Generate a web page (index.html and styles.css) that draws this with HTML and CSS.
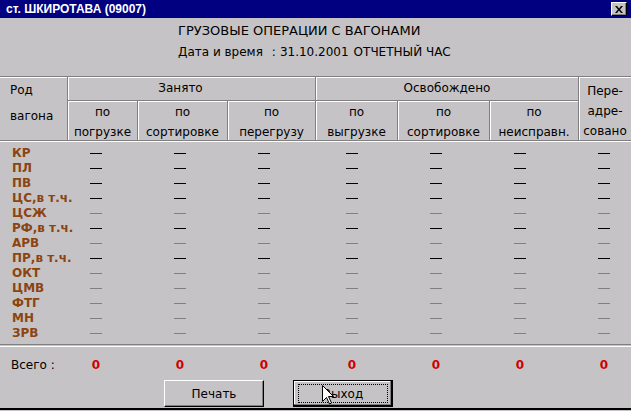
FILE: index.html
```html
<!DOCTYPE html>
<html>
	<head>
		<meta charset="utf-8">
		<title>Грузовые операции с вагонами</title>
		<link rel="stylesheet" href="styles.css">
	</head>
	<body>
		<div class="window">
			<div class="titlebar">
				<span class="titlebar__text">ст. ШКИРОТАВА (09007)</span>
				<button class="titlebar__close" type="button">
					<svg width="8" height="7" viewBox="0 0 8 7"><path d="M0 0h2l2 2.5L6 0h2L5 3.5 8 7H6L4 4.5 2 7H0l3-3.5z" fill="#000"/></svg>
				</button>
			</div>

			<div class="caption">
				<div class="caption__title">ГРУЗОВЫЕ ОПЕРАЦИИ С ВАГОНАМИ</div>
				<div class="caption__date"><span>Дата и время</span><span class="caption__colon">:</span><span>31.10.2001</span><span class="caption__hour">ОТЧЕТНЫЙ ЧАС</span></div>
			</div>

			<div class="head">
				<div class="head__cell head__rod"><span>Род</span><span>вагона</span></div>
				<div class="head__cell head__group head__busy">Занято</div>
				<div class="head__cell head__group head__free">Освобождено</div>
				<div class="head__cell head__re">Пере-<br>адре-<br>совано</div>
				<div class="head__cell head__sub">по<br>погрузке</div>
				<div class="head__cell head__sub">по<br>сортировке</div>
				<div class="head__cell head__sub">по<br>перегрузу</div>
				<div class="head__cell head__sub">по<br>выгрузке</div>
				<div class="head__cell head__sub">по<br>сортировке</div>
				<div class="head__cell head__sub">по<br>неисправн.</div>
			</div>

			<div class="data">
				<div class="data__row"><span class="data__label">КР</span><i class="dash"></i><i class="dash"></i><i class="dash"></i><i class="dash"></i><i class="dash"></i><i class="dash"></i><i class="dash"></i></div>
				<div class="data__row"><span class="data__label">ПЛ</span><i class="dash"></i><i class="dash"></i><i class="dash"></i><i class="dash"></i><i class="dash"></i><i class="dash"></i><i class="dash"></i></div>
				<div class="data__row"><span class="data__label">ПВ</span><i class="dash"></i><i class="dash"></i><i class="dash"></i><i class="dash"></i><i class="dash"></i><i class="dash"></i><i class="dash"></i></div>
				<div class="data__row"><span class="data__label">ЦС,в т.ч.</span><i class="dash"></i><i class="dash"></i><i class="dash"></i><i class="dash"></i><i class="dash"></i><i class="dash"></i><i class="dash"></i></div>
				<div class="data__row off"><span class="data__label">ЦСЖ</span><i class="dash"></i><i class="dash"></i><i class="dash"></i><i class="dash"></i><i class="dash"></i><i class="dash"></i><i class="dash"></i></div>
				<div class="data__row"><span class="data__label">РФ,в т.ч.</span><i class="dash"></i><i class="dash"></i><i class="dash"></i><i class="dash"></i><i class="dash"></i><i class="dash"></i><i class="dash"></i></div>
				<div class="data__row off"><span class="data__label">АРВ</span><i class="dash"></i><i class="dash"></i><i class="dash"></i><i class="dash"></i><i class="dash"></i><i class="dash"></i><i class="dash"></i></div>
				<div class="data__row"><span class="data__label">ПР,в т.ч.</span><i class="dash"></i><i class="dash"></i><i class="dash"></i><i class="dash"></i><i class="dash"></i><i class="dash"></i><i class="dash"></i></div>
				<div class="data__row off"><span class="data__label">ОКТ</span><i class="dash"></i><i class="dash"></i><i class="dash"></i><i class="dash"></i><i class="dash"></i><i class="dash"></i><i class="dash"></i></div>
				<div class="data__row off"><span class="data__label">ЦМВ</span><i class="dash"></i><i class="dash"></i><i class="dash"></i><i class="dash"></i><i class="dash"></i><i class="dash"></i><i class="dash"></i></div>
				<div class="data__row off"><span class="data__label">ФТГ</span><i class="dash"></i><i class="dash"></i><i class="dash"></i><i class="dash"></i><i class="dash"></i><i class="dash"></i><i class="dash"></i></div>
				<div class="data__row off"><span class="data__label">МН</span><i class="dash"></i><i class="dash"></i><i class="dash"></i><i class="dash"></i><i class="dash"></i><i class="dash"></i><i class="dash"></i></div>
				<div class="data__row off"><span class="data__label">ЗРВ</span><i class="dash"></i><i class="dash"></i><i class="dash"></i><i class="dash"></i><i class="dash"></i><i class="dash"></i><i class="dash"></i></div>
			</div>

			<div class="total">
				<span class="total__label">Всего :</span>
				<span class="total__value">0</span>
				<span class="total__value">0</span>
				<span class="total__value">0</span>
				<span class="total__value">0</span>
				<span class="total__value">0</span>
				<span class="total__value">0</span>
				<span class="total__value">0</span>
			</div>

			<div class="buttons">
				<button class="btn" type="button">Печать</button>
				<button class="btn btn--default" type="button">Выход</button>
			</div>

			<svg class="cursor" width="13" height="20" viewBox="0 0 13 20"><path d="M0.5 0.5V16.5L4.5 12.5L7.5 19L9.5 18L6.5 11.5H11.5Z" fill="#fff" stroke="#000" stroke-width="1"/></svg>
		</div>
	</body>
</html>
```

FILE: styles.css
```css
*{ box-sizing:border-box; }
html,body{ margin:0; padding:0; }
body{ background:#c6c3c6; font-family:"DejaVu Sans", sans-serif; font-size:12px; color:#000; }
button{ margin:0; padding:0; font-family:inherit; color:#000; }

.window{ position:relative; width:631px; height:410px; background:#c6c3c6; border-bottom:2px solid #000; overflow:hidden; }

.titlebar{ display:flex; align-items:center; justify-content:space-between; height:18px; padding:0 4px 0 6px; background:#000080; }
.titlebar__text{ color:#fff; font:bold 12px "Liberation Sans", sans-serif; }
.titlebar__close{ display:flex; align-items:center; justify-content:center; width:16px; height:14px; background:#c6c3c6; border:1px solid; border-color:#fff #000 #000 #fff; box-shadow:inset -1px -1px 0 #808080; }

.caption{ height:58px; padding:3px 0 0 178px; line-height:20px; white-space:nowrap; }
.caption__title{ font-size:13px; }
.caption__date{ display:flex; margin-top:1px; font-size:12px; }
.caption__colon{ margin:0 4px 0 9px; }
.caption__hour{ margin-left:5px; }

.head{ display:grid; grid-template-columns:67px 70px 90px 88px 82px 92px 89px 1fr; grid-template-rows:24px 39px; border-top:1px solid #808080; border-bottom:1px solid #808080; }
.head__cell{ border-left:1px solid #808080; box-shadow:inset 1px 1px 0 #fff; text-align:center; }
.head__rod{ grid-column:1; grid-row:1 / 3; display:flex; flex-direction:column; gap:12px; padding:6px 0 0 10px; border-left:none; box-shadow:inset 0 1px 0 #fff; text-align:left; line-height:14px; }
.head__group{ grid-row:1; border-bottom:1px solid #808080; line-height:23px; }
.head__busy{ grid-column:2 / 5; padding-right:22px; }
.head__free{ grid-column:5 / 8; }
.head__re{ grid-column:8; grid-row:1 / 3; padding-top:4px; line-height:20px; }
.head__sub{ grid-row:2; padding-top:1px; line-height:20px; }

.data{ padding:4px 0 3px; border-top:1px solid #fff; border-bottom:1px solid #808080; }
.data__row{ display:grid; grid-template-columns:90px 84px 84px 88px 84px 84px 84px 1fr; align-items:center; height:15px; }
.data__label{ padding-left:12px; color:#8c4410; font-weight:bold; line-height:15px; white-space:nowrap; }
.dash{ display:block; width:12px; height:1px; background:#000; }
.data__row.off .dash{ background:#808080; }

.total{ display:grid; grid-template-columns:90px 84px 84px 88px 84px 84px 84px 1fr; margin-top:1px; padding-top:11px; border-top:1px solid #fff; line-height:15px; }
.total__label{ padding-left:11px; }
.total__value{ width:12px; text-align:center; color:#d00000; font-weight:bold; }

.buttons{ display:flex; gap:29px; margin-top:7px; padding-left:164px; }
.btn{ position:relative; width:100px; height:27px; background:#c6c3c6; border:1px solid; border-color:#fff #000 #000 #fff; box-shadow:inset -1px -1px 0 #808080; font-size:12px; }
.btn--default{ border-color:#000; box-shadow:inset -1px -1px 0 #000, inset -2px -2px 0 #808080, inset 1px 1px 0 #fff; }
.btn--default:after{ content:""; position:absolute; top:3px; right:4px; bottom:3px; left:4px; border:1px dotted #000; }

.cursor{ position:absolute; left:322px; top:385px; }
```
